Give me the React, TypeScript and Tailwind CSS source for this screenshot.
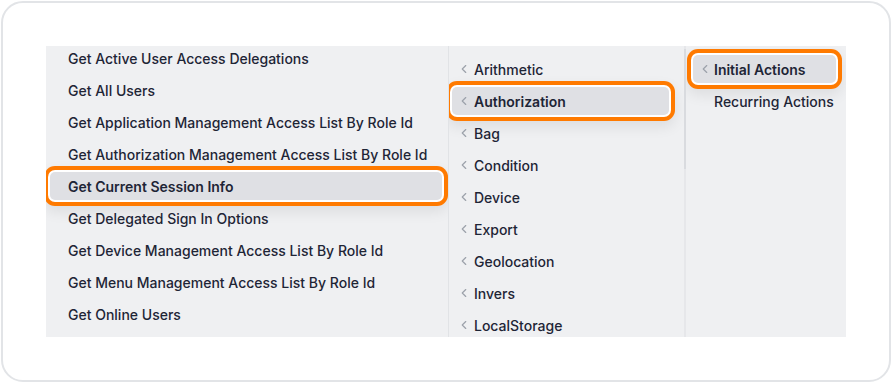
import React from "react";
import { ChevronLeft } from "lucide-react";

const methods = [
  "Get Active User Access Delegations",
  "Get All Users",
  "Get Application Management Access List By Role Id",
  "Get Authorization Management Access List By Role Id",
  "Get Current Session Info",
  "Get Delegated Sign In Options",
  "Get Device Management Access List By Role Id",
  "Get Menu Management Access List By Role Id",
  "Get Online Users",
];

const groups = [
  "Arithmetic",
  "Authorization",
  "Bag",
  "Condition",
  "Device",
  "Export",
  "Geolocation",
  "Invers",
  "LocalStorage",
];

const actions = ["Initial Actions", "Recurring Actions"];

// selected rows get the white gap + orange frame
const picked =
  "bg-[#dfe0e4] font-semibold shadow-[0_0_0_2px_#ffffff,0_0_0_6px_#ff7a00,0_6px_14px_6px_rgba(0,0,0,0.08)]";

export default function App() {
  return (
    <div className="w-[892px] h-[383px] bg-white p-px font-['Inter','Noto_Sans',sans-serif] text-[14px] text-[#1e2536]">
      <div className="h-full rounded-[22px] border-2 border-[#e2e4e7] p-[43px]">
        <div className="flex h-full bg-[#eff0f2] overflow-hidden">
          {/* Methods */}
          <div className="w-[403px] shrink-0 border-r border-[#e1e3e6] overflow-hidden">
            <div className="-mt-0.5 flex flex-col gap-1 pl-1 pr-[6px]">
              {methods.map((m) => (
                <div
                  key={m}
                  className={`flex h-7 items-center rounded-[5px] pl-[18px] font-medium ${
                    m === "Get Current Session Info" ? picked : ""
                  }`}
                >
                  {m}
                </div>
              ))}
            </div>
          </div>

          {/* Groups */}
          <div className="w-[235px] shrink-0 overflow-hidden">
            <div className="flex flex-col gap-1 pt-[9px] pl-[3px] pr-[15px]">
              {groups.map((g) => (
                <div
                  key={g}
                  className={`flex h-7 shrink-0 items-center gap-[3px] rounded-[5px] pl-[5px] font-medium ${
                    g === "Authorization" ? picked : ""
                  }`}
                >
                  <ChevronLeft className="w-[14px] h-[14px] text-[#9ca1aa]" strokeWidth={2} />
                  {g}
                </div>
              ))}
            </div>
          </div>
          <div className="w-[2px] shrink-0 bg-[#e6e7ea]">
            <div className="mt-[3px] h-[120px] bg-[#d9dbdf]" />
          </div>

          {/* Actions */}
          <div className="flex-1 overflow-hidden">
            <div className="flex flex-col gap-1 pt-[9px] pl-[7px] pr-[10px]">
              {actions.map((a, i) => (
                <div
                  key={a}
                  className={`flex h-7 items-center gap-[2px] rounded-[5px] pl-[5px] font-medium ${
                    i === 0 ? picked : ""
                  }`}
                >
                  <ChevronLeft
                    className={`w-[14px] h-[14px] text-[#9ca1aa] ${i === 0 ? "" : "invisible"}`}
                    strokeWidth={2}
                  />
                  {a}
                </div>
              ))}
            </div>
          </div>
        </div>
      </div>
    </div>
  );
}
